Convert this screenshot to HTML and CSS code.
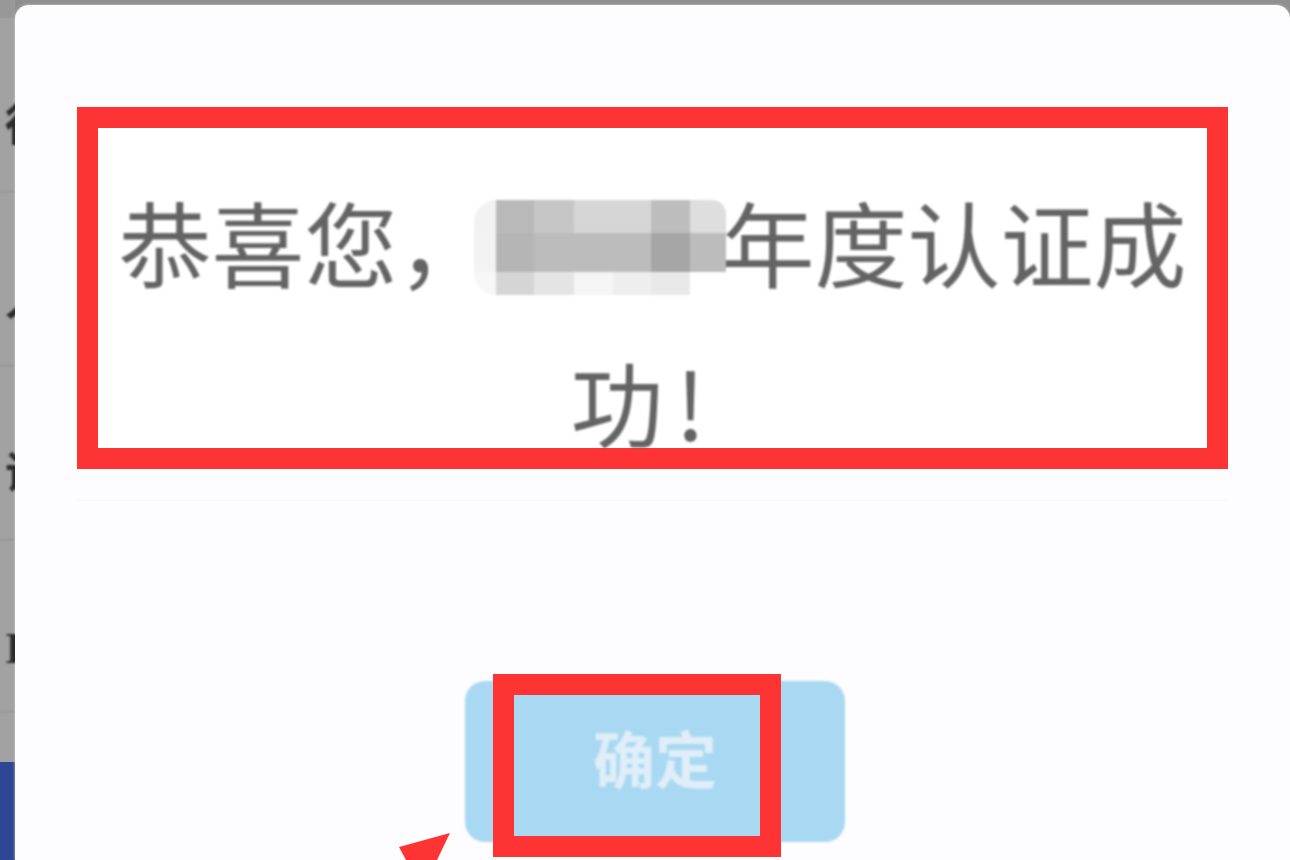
FILE: index.html
```html
<!DOCTYPE html>
<html lang="zh-CN">
<head>
<meta charset="utf-8">
<title>认证成功</title>
<link rel="stylesheet" href="styles.css">
</head>
<body>
<div class="page">
  <aside class="backdrop">
    <div class="backdrop-top"></div>
    <div class="backdrop-row">得</div>
    <div class="backdrop-row">人</div>
    <div class="backdrop-row">证</div>
    <div class="backdrop-row backdrop-row-short">I</div>
    <div class="backdrop-blue"></div>
  </aside>
  <main class="modal">
    <section class="message">
      <p class="message-text">恭喜您，<span class="mosaic"><i class="c ghost"></i><i class="c t1"></i><i class="c t2"></i><i class="c t3"></i><i class="c t3"></i><i class="c t4"></i><i class="c t5 round"></i><i class="c t6"></i><i class="c t7"></i><i class="c t8"></i><i class="c t8"></i><i class="c t8"></i><i class="c t9"></i><i class="c t8"></i><i class="c ghost-low"></i><i class="c t10"></i><i class="c t11"></i><i class="c t12"></i><i class="c t13"></i><i class="c t14"></i><i class="c"></i></span>年度认证成<span class="last-line">功</span><span class="bang">!</span></p>
    </section>
    <div class="modal-rule"></div>
    <div class="actions">
      <div class="button-wrap">
        <button class="confirm" type="button">确定</button>
        <div class="highlight"></div>
        <svg class="arrow" width="70" height="34" viewBox="0 0 70 34" aria-hidden="true">
          <path d="M51 7 L0 21 L7 34 L38 34 Z" fill="#fe3333"/>
        </svg>
      </div>
    </div>
  </main>
</div>
</body>
</html>
```

FILE: styles.css
```css
* { box-sizing: border-box; }
html, body { margin: 0; height: 100%; overflow: hidden; }
body { background: #8f8f8f; font-family: "Noto Sans CJK SC", "Noto Sans", sans-serif; }

.page { display: flex; width: 1290px; height: 860px; padding-top: 5px; overflow: hidden; }

.backdrop { width: 15px; flex: none; margin-top: -5px; background: #a2a2a2; display: flex; flex-direction: column; overflow: hidden; }
.backdrop-top { height: 18px; flex: none; background: #989898; }
.backdrop-row { height: 174px; flex: none; border-bottom: 1px solid #8c8c8c; padding: 22px 0 0 5px; font: 700 44px/174px "Liberation Serif", "Noto Sans CJK SC", serif; color: #2c2c2c; white-space: nowrap; filter: blur(1px); }
.backdrop-row-short { height: 172px; }
.backdrop-blue { margin-top: 50px; flex: 1; background: #2f4596; }

.modal { flex: 1; min-width: 0; background: #fdfcfe; border-radius: 14px 14px 0 0; box-shadow: 0 0 3px #c8c8c8; display: flex; flex-direction: column; align-items: stretch; }

.message { height: 362px; margin: 102px 62px 0; border: 21px solid #fe3333; background: #fff; padding-top: 33px; }
.message-text { margin: 0; width: 1109px; font-size: 93px; line-height: 160px; text-align: center; color: #646464; filter: blur(1.2px); }

.mosaic { display: inline-grid; vertical-align: 48px; grid-template-columns: 22px 38px 40px 39px 38px 39px 36px; grid-template-rows: 33px 39px 23px; width: 252px; height: 95px; margin: -50px -4px -30px -17px; line-height: 0; }
.c { display: block; }
.ghost { background: #f2f2f2; border-radius: 22px 0 0 0; }
.ghost-low { background: #f7f7f7; border-radius: 0 0 0 22px; }
.round { border-radius: 0 14px 0 0; }
.t1 { background: #b9b9b9; }
.t2 { background: #c6c6c6; }
.t3 { background: #d6d6d6; }
.t4 { background: #bdbdbd; }
.t5 { background: #dedede; }
.t6 { background: #f3f3f3; }
.t7 { background: #b5b5b5; }
.t8 { background: #bcbcbc; }
.t9 { background: #a6a6a6; }
.t10 { background: #d5d5d5; }
.t11 { background: #e4e4e4; }
.t12 { background: #f5f5f5; }
.t13 { background: #eeeeee; }
.t14 { background: #e9e9e9; }

.last-line { letter-spacing: 12px; }
.bang { padding-right: 29px; }

.modal-rule { height: 1px; margin: 31px 62px 0; background: #f8f7f9; flex: none; }

.actions { display: flex; justify-content: center; margin-top: 180px; padding-left: 5px; }
.button-wrap { position: relative; width: 380px; height: 161px; }
.confirm { display: block; width: 100%; height: 100%; border: 0; border-radius: 20px; background: #a9d9f2; color: #dfeef8; font: 700 62px/1 "Noto Sans CJK SC", sans-serif; padding: 0 0 10px; filter: blur(1.2px); }
.highlight { position: absolute; left: 28px; top: -7px; width: 288px; height: 183px; border: 21px solid #fe3333; }
.arrow { position: absolute; left: -66px; top: 145px; }
```
